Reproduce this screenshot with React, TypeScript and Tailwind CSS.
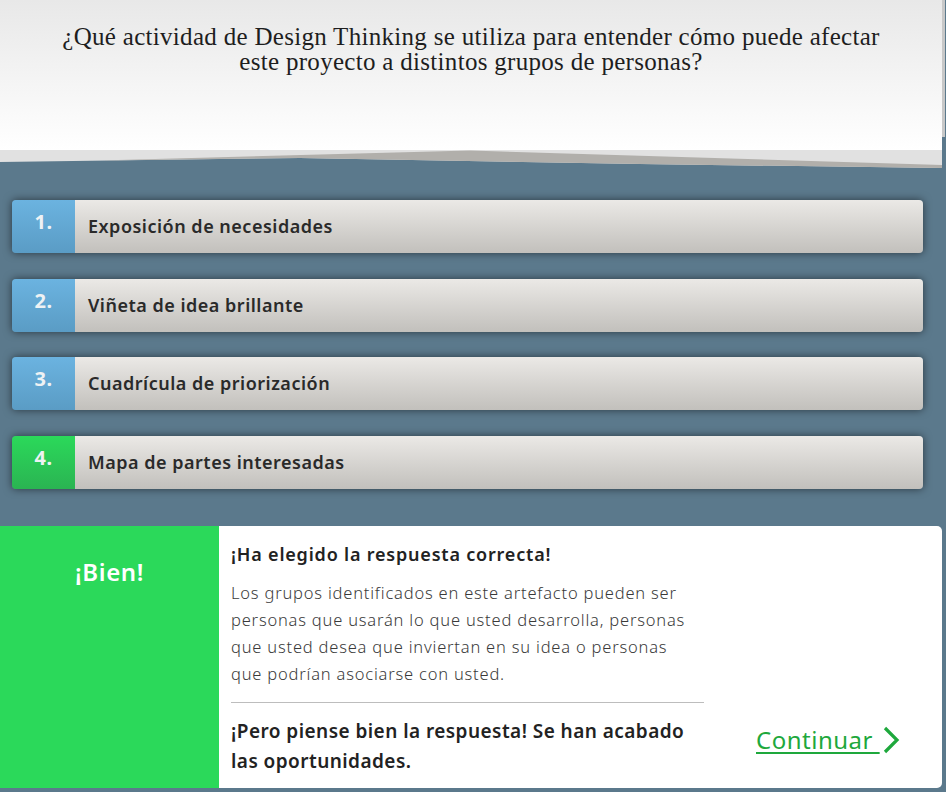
import React from "react";

const options = [
  { n: "1.", text: "Exposición de necesidades", green: false },
  { n: "2.", text: "Viñeta de idea brillante", green: false },
  { n: "3.", text: "Cuadrícula de priorización", green: false },
  { n: "4.", text: "Mapa de partes interesadas", green: true },
];

export default function App() {
  return (
    <div className="min-h-[792px] w-[946px] bg-[#5b798c] overflow-hidden" style={{ fontFamily: '"Noto Sans", "Open Sans", sans-serif' }}>
      {/* Header */}
      <div className="flex">
        <div className="w-[942px] h-[150px] bg-gradient-to-b from-[#e8e8e8] to-white pt-[24px] text-center text-[25px] leading-[25px] tracking-[0.3px] text-[#1e1e1e]" style={{ fontFamily: '"Liberation Serif", serif' }}>
          ¿Qué actividad de Design Thinking se utiliza para entender cómo puede afectar
          <br />
          este proyecto a distintos grupos de personas?
        </div>
        <div className="w-[3px] h-[137px] bg-[#c8c8c8]" />
      </div>
      <svg width="946" height="20" viewBox="0 0 946 20" className="block">
        <polygon points="0,0 942,0 942,18 640,14 300,8 0,12" fill="#e1e1e1" />
        <polygon points="100,10.5 470,0.5 942,15 942,18 640,14 300,8" fill="#b1afab" />
      </svg>

      {/* Options */}
      <div className="ml-[12px] w-[911px] pt-[30px] flex flex-col gap-[25.5px]">
        {options.map((o) => (
          <div key={o.n} className="flex h-[53px] rounded-[4px] overflow-hidden shadow-[0_0_8px_rgba(0,0,0,0.55)]">
            <div className={`w-[63px] flex justify-center pt-[10px] text-[20px] leading-[24px] font-bold tracking-[0.5px] text-[#eef2f4] ${o.green ? "bg-gradient-to-b from-[#2bd95a] to-[#2ab452]" : "bg-gradient-to-b from-[#6bb3e0] to-[#5a9cc5]"}`}>
              {o.n}
            </div>
            <div className="flex-1 flex items-center pl-[13px] bg-gradient-to-b from-[#ebe9e6] to-[#c2c0bc] text-[18px] font-semibold tracking-[0.5px] text-[#2a2a2a]">
              {o.text}
            </div>
          </div>
        ))}
      </div>

      {/* Feedback */}
      <div className="mt-[37px] flex h-[262px]">
        <div className="w-[219px] bg-[#2bd95a] flex justify-center pt-[30px] text-[24px] leading-[32px] font-semibold tracking-[0.6px] text-white">
          ¡Bien!
        </div>
        <div className="w-[723px] bg-white rounded-r-[5px] flex">
          <div className="w-[485px] pl-[12px] pt-[15px]">
            <div className="text-[18px] leading-[26px] font-semibold tracking-[0.8px] text-[#222]">¡Ha elegido la respuesta correcta!</div>
            <p className="mt-[12px] text-[16.5px] leading-[27px] font-light tracking-[0.8px] text-[#3a3a3a]">
              Los grupos identificados en este artefacto pueden ser
              <br />
              personas que usarán lo que usted desarrolla, personas
              <br />
              que usted desea que inviertan en su idea o personas
              <br />
              que podrían asociarse con usted.
            </p>
            <div className="mt-[15px] h-px bg-[#bdbdbd]" />
            <div className="mt-[13px] text-[19px] leading-[30px] font-semibold tracking-[0.45px] text-[#222]">
              ¡Pero piense bien la respuesta! Se han acabado
              <br />
              las oportunidades.
            </div>
          </div>
          <div className="flex-1 flex flex-col justify-end pb-[33px] pl-[52px]">
            <div className="flex items-center">
              <span className="text-[24px] leading-[30px] tracking-[0.5px] text-[#1ea83c] underline underline-offset-[3px] decoration-[2px]">Continuar&nbsp;</span>
              <svg width="20" height="28" viewBox="0 0 20 28" className="ml-[1px]">
                <polyline points="4,2 16,14 4,26" fill="none" stroke="#1ea83c" strokeWidth="3.2" />
              </svg>
            </div>
          </div>
        </div>
      </div>
    </div>
  );
}
